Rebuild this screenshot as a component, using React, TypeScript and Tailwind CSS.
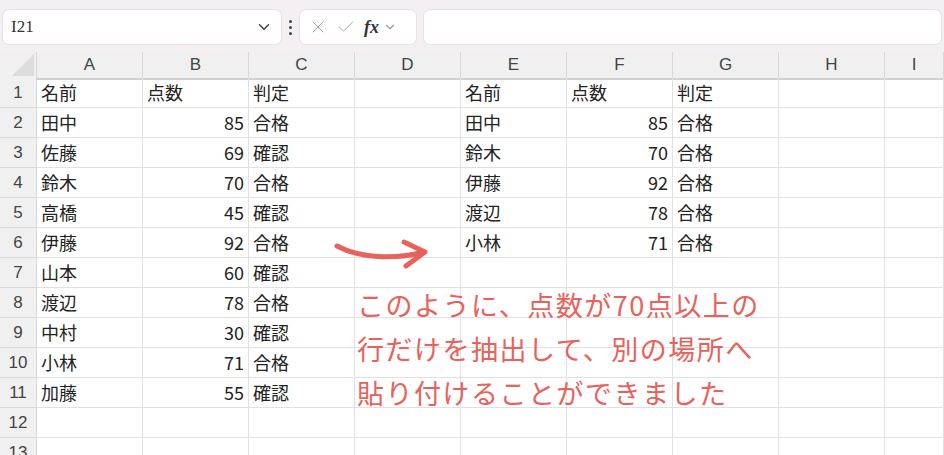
import { ChevronDown, X, Check } from "lucide-react";

const left: [string, string, string][] = [
  ["名前", "点数", "判定"],
  ["田中", "85", "合格"],
  ["佐藤", "69", "確認"],
  ["鈴木", "70", "合格"],
  ["高橋", "45", "確認"],
  ["伊藤", "92", "合格"],
  ["山本", "60", "確認"],
  ["渡辺", "78", "合格"],
  ["中村", "30", "確認"],
  ["小林", "71", "合格"],
  ["加藤", "55", "確認"],
];
const right: [string, string, string][] = [
  ["名前", "点数", "判定"],
  ["田中", "85", "合格"],
  ["鈴木", "70", "合格"],
  ["伊藤", "92", "合格"],
  ["渡辺", "78", "合格"],
  ["小林", "71", "合格"],
];
const cols = ["A", "B", "C", "D", "E", "F", "G", "H", "I"];

function Cell({ v, num }: { v?: string; num?: boolean }) {
  return (
    <div className={`h-[30px] border-r border-b border-[#e1e1e1] px-1 flex items-center text-[18px] text-[#222] ${num ? "justify-end" : ""}`}>
      {v}
    </div>
  );
}

export default function App() {
  const rows = Array.from({ length: 13 }, (_, i) => i);
  return (
    <div className="relative w-[944px] h-[455px] overflow-hidden bg-white" style={{ fontFamily: "'Noto Sans CJK JP', 'Liberation Sans', sans-serif" }}>
      {/* formula bar */}
      <div className="h-[52px] bg-[#f3eff3] flex items-center gap-2 px-[3px] pt-[2px]">
        <div className="w-[278px] h-[34px] bg-white rounded-md flex items-center justify-between px-2 shadow-[0_0_0_1px_#e6e2e6]">
          <span className="text-[17px] text-[#333]" style={{ fontFamily: "'Liberation Serif', serif" }}>I21</span>
          <ChevronDown size={18} className="text-[#444]" />
        </div>
        <div className="flex flex-col gap-[3px]">
          <span className="w-[3px] h-[3px] bg-[#444] rounded-full" />
          <span className="w-[3px] h-[3px] bg-[#444] rounded-full" />
          <span className="w-[3px] h-[3px] bg-[#444] rounded-full" />
        </div>
        <div className="w-[116px] h-[34px] bg-white rounded-md flex items-center gap-2 px-2 shadow-[0_0_0_1px_#e6e2e6]">
          <X size={20} strokeWidth={1.2} className="text-[#aaa]" />
          <Check size={20} strokeWidth={1.2} className="text-[#aaa]" />
          <span className="italic font-bold text-[18px] text-[#333]" style={{ fontFamily: "'Liberation Serif', serif" }}>fx</span>
          <ChevronDown size={14} className="text-[#999] -ml-1" />
        </div>
        <div className="flex-1 h-[34px] bg-white rounded-md shadow-[0_0_0_1px_#e6e2e6]" />
      </div>
      {/* header */}
      <div className="grid grid-cols-[37px_repeat(8,106px)_1fr] h-[28px] bg-[#f0f0f0] border-b-2 border-[#d0d0d0]">
        <div className="border-r border-[#d8d8d8] relative">
          <div className="absolute right-[2px] bottom-[2px] w-0 h-0 border-l-[22px] border-l-transparent border-b-[22px] border-b-[#dcdcdc]" />
        </div>
        {cols.map((c) => (
          <div key={c} className="border-r border-[#d8d8d8] flex items-center justify-center text-[17px] text-[#444]" style={{ fontFamily: "'Liberation Sans', sans-serif" }}>
            {c}
          </div>
        ))}
      </div>
      {/* body */}
      <div className="grid grid-cols-[37px_repeat(8,106px)_1fr] -mt-[2px]">
        {rows.map((i) => {
          const l = left[i];
          const r = right[i];
          return [
            <div key={`h${i}`} className="h-[30px] bg-[#f0f0f0] border-r border-b border-[#d8d8d8] flex items-center justify-center text-[17px] text-[#444]" style={{ fontFamily: "'Liberation Sans', sans-serif" }}>{i + 1}</div>,
            <Cell key={`a${i}`} v={l?.[0]} />,
            <Cell key={`b${i}`} v={l?.[1]} num={i > 0} />,
            <Cell key={`c${i}`} v={l?.[2]} />,
            <Cell key={`d${i}`} />,
            <Cell key={`e${i}`} v={r?.[0]} />,
            <Cell key={`f${i}`} v={r?.[1]} num={i > 0} />,
            <Cell key={`g${i}`} v={r?.[2]} />,
            <Cell key={`hh${i}`} />,
            <Cell key={`i${i}`} />,
          ];
        })}
      </div>
      {/* annotation */}
      <svg className="absolute left-[334px] top-[236px]" width="96" height="36" viewBox="0 0 96 36">
        <path d="M3 10 C 25 22, 60 24, 90 16" fill="none" stroke="#e8615b" strokeWidth="5" strokeLinecap="round" />
        <path d="M70 6 L91 16 L72 30" fill="none" stroke="#e8615b" strokeWidth="5" strokeLinecap="round" strokeLinejoin="round" />
      </svg>
      <div className="absolute left-[357px] top-[283px] text-[27px] leading-[44px] text-[#e8615b] tracking-[1.5px]" style={{ fontFamily: "'Noto Sans CJK JP', sans-serif" }}>
        <div>このように、点数が70点以上の</div>
        <div>行だけを抽出して、別の場所へ</div>
        <div>貼り付けることができました</div>
      </div>
    </div>
  );
}
